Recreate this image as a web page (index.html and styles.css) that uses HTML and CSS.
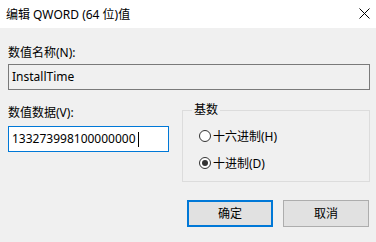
FILE: index.html
```html
<!DOCTYPE html>
<html>
<head>
<meta charset="utf-8">
<link rel="stylesheet" href="styles.css">
</head>
<body>
<div class="window">
  <div class="titlebar">
    <span class="title">编辑 QWORD (64 位)值</span>
    <svg class="close" width="11" height="11" viewBox="0 0 11 11"><path d="M0.5 0.5 L10.5 10.5 M10.5 0.5 L0.5 10.5" stroke="#000" stroke-width="1" fill="none"/></svg>
  </div>
  <div class="content">
    <div class="label first">数值名称(N):</div>
    <div class="field readonly">InstallTime</div>
    <div class="row">
      <div class="col">
        <div class="label">数值数据(V):</div>
        <div class="field focus">133273998100000000<span class="caret"></span></div>
      </div>
      <fieldset class="group">
        <legend>基数</legend>
        <div class="radio"><span class="circle"></span><span>十六进制(H)</span></div>
        <div class="radio checked"><span class="circle"></span><span>十进制(D)</span></div>
      </fieldset>
    </div>
    <div class="buttons">
      <div class="btn default">确定</div>
      <div class="btn">取消</div>
    </div>
  </div>
</div>
</body>
</html>
```
FILE: styles.css
```css
* { box-sizing: border-box; }
html, body { margin: 0; padding: 0; }
body {
  width: 376px;
  height: 242px;
  background: #f0f0f0;
  font-family: "Noto Sans", "Noto Sans CJK SC", sans-serif;
  font-size: 12px;
  color: #000;
  overflow: hidden;
}
.window { width: 376px; height: 242px; }
.titlebar {
  height: 28px;
  background: #fff;
  display: flex;
  align-items: center;
  justify-content: space-between;
  padding: 1px 6px 0 6px;
}
.title { line-height: 16px; }
.close { display: block; margin-top: -2px; }
.content { padding: 0 6px 0 8px; }
.label { line-height: 16px; }
.label.first { margin-top: 17px; }
.field {
  height: 26px;
  border: 1px solid #7a7a7a;
  display: flex;
  align-items: center;
  padding-left: 3px;
  line-height: 16px;
  margin-top: 3px;
}
.field.readonly { background: #f0f0f0; }
.field.focus { background: #fff; border-color: #0078d7; margin-top: 5px; }
.caret { display: inline-block; width: 1px; height: 15px; background: #000; margin-left: 2px; }
.row { display: flex; align-items: flex-start; margin-top: 12px; }
.col { width: 161px; padding-top: 3px; }
.group {
  margin: 0 0 0 13px;
  width: 188px;
  border: 1px solid #dcdcdc;
  padding: 9px 0 9px 16px;
  min-width: 0;
}
.group legend {
  margin-left: 6px;
  padding: 0 2px;
  line-height: 16px;
  margin-left: -7px;
}
.radio { display: flex; align-items: center; height: 18px; }
.radio + .radio { margin-top: 9px; }
.circle {
  width: 12px; height: 12px;
  border: 1px solid #333;
  border-radius: 50%;
  background: #fff;
  margin-right: 2px;
  display: flex; align-items: center; justify-content: center;
}
.radio.checked .circle::after {
  content: "";
  width: 6px; height: 6px;
  border-radius: 50%;
  background: #333;
}
.buttons { display: flex; justify-content: flex-end; gap: 10px; margin-top: 18px; margin-right: 1px; }
.btn {
  width: 86px; height: 27px;
  background: #e1e1e1;
  border: 1px solid #adadad;
  display: flex; align-items: center; justify-content: center;
  line-height: 16px;
}
.btn.default { border: 2px solid #0078d7; }
```
